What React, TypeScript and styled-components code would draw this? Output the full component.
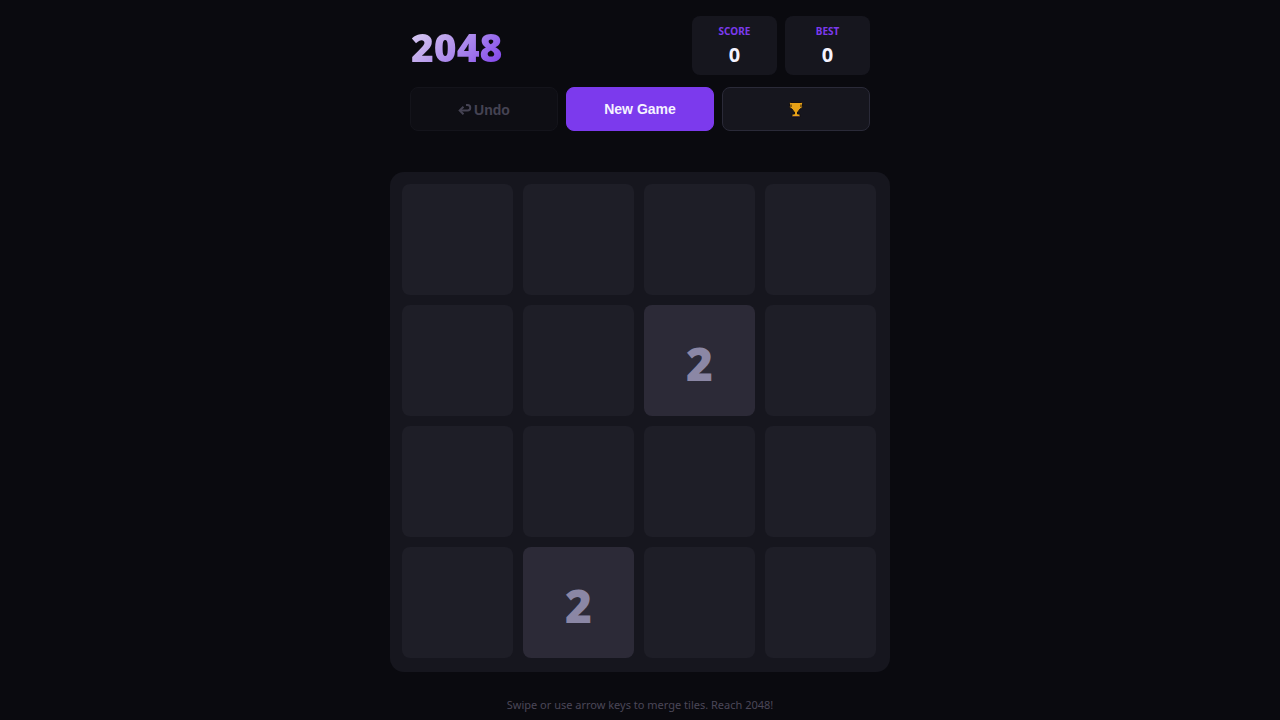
import React from "react";
import styled, { createGlobalStyle } from "styled-components";

const GlobalStyle = createGlobalStyle`
  * { box-sizing: border-box; }
  body {
    margin: 0;
    background: #0a0a0f;
    color: #f5f3ff;
    font-family: "Segoe UI", "Noto Sans", "Open Sans", sans-serif;
  }
`;

const Page = styled.div`
  display: flex;
  flex-direction: column;
  align-items: center;
  min-height: 100vh;
`;

const Game = styled.main`
  width: 100%;
  max-width: 500px;
`;

const Header = styled.header`
  display: flex;
  flex-direction: column;
  gap: 12px;
  padding: 16px 20px 0;
`;

const TitleRow = styled.div`
  display: flex;
  align-items: center;
  justify-content: space-between;
`;

const Title = styled.h1`
  margin: 0;
  padding: 2px 0 0 1px;
  font-size: 39px;
  line-height: 48px;
  font-weight: 900;
  background: linear-gradient(135deg, #e0d8f4 0%, #bfa6ec 35%, #a078ec 65%, #7c3aed 100%);
  -webkit-background-clip: text;
  background-clip: text;
  color: transparent;
`;

const Scores = styled.div`
  display: flex;
  gap: 8px;
`;

const ScoreBox = styled.div`
  display: flex;
  flex-direction: column;
  align-items: center;
  width: 85px;
  padding: 8px 0 4px;
  border-radius: 8px;
  background: #16161e;
`;

const ScoreLabel = styled.span`
  font-size: 10px;
  line-height: 15px;
  font-weight: 700;
  text-transform: uppercase;
  color: #7c3aed;
`;

const ScoreValue = styled.span`
  font-size: 20px;
  line-height: 32px;
  font-weight: 700;
`;

const Controls = styled.div`
  display: grid;
  grid-template-columns: repeat(3, 1fr);
  gap: 8px;
`;

const Button = styled.button<{ $primary?: boolean }>`
  display: flex;
  align-items: center;
  justify-content: center;
  gap: 2px;
  height: 44px;
  padding: 0;
  border: 1px solid ${(p) => (p.$primary ? "#7c3aed" : "#2a2a38")};
  border-radius: 8px;
  background: ${(p) => (p.$primary ? "#7c3aed" : "#16161e")};
  color: #f5f3ff;
  font: bold 14px "Liberation Sans", Arial, sans-serif;
  cursor: pointer;

  &:disabled {
    padding-top: 2px;
    border-color: #14141b;
    background: #0e0e14;
    color: #454353;
    cursor: default;
  }
`;

const Board = styled.section`
  display: grid;
  grid-template-columns: repeat(4, 1fr);
  gap: 10px;
  margin-top: 41px;
  padding: 12px 14px 14px 12px;
  border-radius: 14px;
  background: #16161e;
`;

const Tile = styled.div<{ $filled: boolean }>`
  display: flex;
  align-items: center;
  justify-content: center;
  aspect-ratio: 1;
  padding-top: 4px;
  border-radius: 8px;
  background: ${(p) => (p.$filled ? "#2c2a37" : "#1e1e27")};
  color: #8b87a5;
  font-size: 46px;
  line-height: 56px;
  font-weight: 900;
`;

const Hint = styled.p`
  margin: 24px 0 0;
  text-align: center;
  font-size: 11px;
  line-height: 18px;
  color: #4a4758;
`;

const UndoIcon = () => (
  <svg width="14" height="14" viewBox="0 0 14 14" fill="none" stroke="currentColor" strokeWidth="2" aria-hidden="true">
    <path d="M8 2h1.500a2.700 2.700 0 0 1 0 5.500H2" />
    <path d="M5.500 3.800L1.700 7.500l3.800 3.700" />
  </svg>
);

const TrophyIcon = () => (
  <svg width="16" height="17" viewBox="0 0 16 17" aria-hidden="true">
    <path
      d="M2.500 1.500h11q1 0 1 1v3q0 2-2.500 2.500Q11 10 9.500 11v2h2.500v3H4v-3h2.500v-2Q5 10 4 8 1.500 7.500 1.500 5.500v-3q0-1 1-1z"
      fill="#e6a117"
      stroke="#130f12"
      strokeWidth="1"
      strokeLinejoin="round"
    />
    <path d="M3 3.500v2.500M13 3.500v2.500" stroke="#21160c" strokeWidth="1" />
    <path d="M4.500 15.500h7" stroke="#4a3034" strokeWidth="1" />
  </svg>
);

const cells = [0, 0, 0, 0, 0, 0, 2, 0, 0, 0, 0, 0, 0, 2, 0, 0];

const scores = [
  { label: "Score", value: 0 },
  { label: "Best", value: 0 },
];

export default function App() {
  return (
    <Page>
      <GlobalStyle />
      <Game>
        <Header>
          <TitleRow>
            <Title>2048</Title>
            <Scores>
              {scores.map((s) => (
                <ScoreBox key={s.label}>
                  <ScoreLabel>{s.label}</ScoreLabel>
                  <ScoreValue>{s.value}</ScoreValue>
                </ScoreBox>
              ))}
            </Scores>
          </TitleRow>
          <Controls>
            <Button type="button" disabled>
              <UndoIcon />
              Undo
            </Button>
            <Button type="button" $primary>
              New Game
            </Button>
            <Button type="button" aria-label="Leaderboard">
              <TrophyIcon />
            </Button>
          </Controls>
        </Header>
        <Board aria-label="Game board">
          {cells.map((value, i) => (
            <Tile key={i} $filled={value > 0}>
              {value > 0 ? value : null}
            </Tile>
          ))}
        </Board>
        <Hint>Swipe or use arrow keys to merge tiles. Reach 2048!</Hint>
      </Game>
    </Page>
  );
}
